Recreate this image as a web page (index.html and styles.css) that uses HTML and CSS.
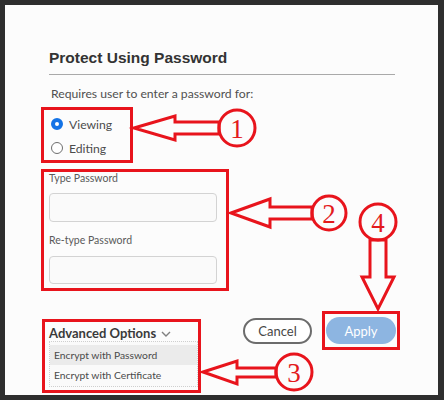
FILE: index.html
```html
<!DOCTYPE html>
<html>
<head>
  <meta charset='utf-8'>
  <title>Protect Using Password</title>
  <meta name='viewport' content='width=device-width, initial-scale=1'>
  <link rel="stylesheet" href="styles.css">
</head>
<body>
  <div class="dialog">
    <h1>Protect Using Password</h1>
    <p class="intro">Requires user to enter a password for:</p>

    <div class="mark radios">
      <label class="radio"><span class="dot checked"></span>Viewing</label>
      <label class="radio"><span class="dot"></span>Editing</label>
    </div>

    <div class="mark fields">
      <div class="label">Type Password</div>
      <div class="input"></div>
      <div class="label second">Re-type Password</div>
      <div class="input last"></div>
    </div>

    <footer>
      <div class="mark advanced">
        <div class="adv-title">Advanced Options
          <svg class="chevron" width="10" height="6" viewBox="0 0 10 6">
            <polyline points="1,1 5,5 9,1" fill="none" stroke="#808080" stroke-width="1.4"/>
          </svg>
        </div>
        <ul class="menu">
          <li class="active">Encrypt with Password</li>
          <li>Encrypt with Certificate</li>
        </ul>
      </div>
      <div class="buttons">
        <button class="cancel">Cancel</button>
        <div class="mark apply-box">
          <button class="apply">Apply</button>
        </div>
      </div>
    </footer>
  </div>

  <!-- annotation arrows and numbers drawn over the dialog -->
  <svg class="notes" width="444" height="400" viewBox="0 0 444 400">
    <g fill="none" stroke="#e8141c" stroke-width="3" stroke-linejoin="miter">
      <polygon points="134,128 175,116 175,122 219,122 219,134 175,134 175,140"/>
      <circle cx="237" cy="128" r="18"/>
      <polygon points="231,213 270,199 270,207 312,207 312,219 270,219 270,227"/>
      <circle cx="329" cy="213" r="17"/>
      <polygon points="370,240 386,240 386,277 394,277 378,309 362,277 370,277"/>
      <circle cx="378" cy="222" r="18"/>
      <polygon points="203,372 237,361 237,368 276,368 276,377 237,377 237,384"/>
      <circle cx="294" cy="372" r="18"/>
    </g>
    <g class="num">
      <text x="237" y="138">1</text>
      <text x="329" y="223">2</text>
      <text x="378" y="232">4</text>
      <text x="294" y="382">3</text>
    </g>
  </svg>
</body>
</html>
```

FILE: styles.css
```css
*, *:before, *:after {
  box-sizing: inherit;
}
html {
  box-sizing: border-box;
}
html, body {
  margin: 0;
  padding: 0;
  width: 444px;
  height: 400px;
  overflow: hidden;
  background: #2e2e2e;
  font-family: Lato, "Open Sans", sans-serif;
}
.dialog {
  margin: 5px 6px 5px 5px;
  height: 390px;
  background: #fcfcfc;
  padding: 43px 43px 0 44px;
}
h1 {
  margin: 0;
  font-family: "Liberation Sans", Arial, sans-serif;
  font-size: 15.5px;
  line-height: 20px;
  font-weight: bold;
  color: #333;
  padding-bottom: 6px;
  border-bottom: 1px solid #a9a9a9;
}
.intro {
  margin: 10px 0 0 2px;
  font-size: 12.2px;
  line-height: 18px;
  color: #505050;
}
.mark {
  border: 3px solid #e8141c;
}
.radios {
  margin: 4px 0 0 -8px;
  width: 92px;
  padding: 2px 0 0 7px;
}
.radio {
  display: flex;
  align-items: center;
  height: 24px;
  font-size: 12.2px;
  color: #4c4c4c;
}
.dot {
  width: 12px;
  height: 12px;
  border-radius: 50%;
  border: 1.5px solid #6e6e6e;
  margin-right: 6px;
  background: #fff;
}
.dot.checked {
  border: 4px solid #1473e6;
}
.fields {
  margin: 6px 0 0 -8px;
  width: 188px;
  padding: 0 0 4px 5px;
}
.label {
  font-size: 10.5px;
  line-height: 12px;
  color: #5a5a5a;
}
.label.second {
  margin-top: 12px;
}
.input {
  margin-top: 9px;
  width: 168px;
  height: 29px;
  border: 1px solid #d3d3d3;
  border-radius: 4px;
  background: #fafafa;
}
.input.last {
  margin-top: 10px;
  height: 28px;
}
footer {
  display: flex;
  justify-content: space-between;
  align-items: flex-start;
  margin: 20px -5px 0 -7px;
}
.advanced {
  margin-top: 8px;
  width: 159px;
  padding: 4px 0 3px 4px;
}
.adv-title {
  font-size: 13px;
  line-height: 14px;
  font-weight: bold;
  color: #3a3a3a;
  display: flex;
  align-items: center;
}
.chevron {
  margin-left: 5px;
  margin-top: 2px;
}
.menu {
  list-style: none;
  margin: 1px 0 0;
  padding: 3px 0 1px;
  border: 1px dotted #cfcfcf;
  background: #fafafa;
}
.menu li {
  height: 20px;
  line-height: 20px;
  padding-left: 4px;
  font-size: 10.3px;
  color: #4a4a4a;
}
.menu li.active {
  background: #ebebeb;
}
.buttons {
  display: flex;
  align-items: flex-start;
  gap: 10px;
}
button {
  font-family: Lato, "Open Sans", sans-serif;
  font-size: 13px;
  cursor: pointer;
}
.cancel {
  margin-top: 7px;
  width: 69px;
  height: 26px;
  border: 2px solid #6c6c6c;
  border-radius: 13px;
  background: #fff;
  color: #474747;
  padding: 0;
}
.apply-box {
  width: 78px;
  padding: 3px 1px;
}
.apply {
  display: block;
  width: 70px;
  height: 27px;
  border: none;
  border-radius: 14px;
  background: #8db5e1;
  color: #fff;
  padding: 0;
}
.notes {
  position: absolute;
  left: 0;
  top: 0;
  pointer-events: none;
}
.num text {
  font-family: "Liberation Serif", serif;
  font-size: 27px;
  fill: #e31a1c;
  text-anchor: middle;
}
```
